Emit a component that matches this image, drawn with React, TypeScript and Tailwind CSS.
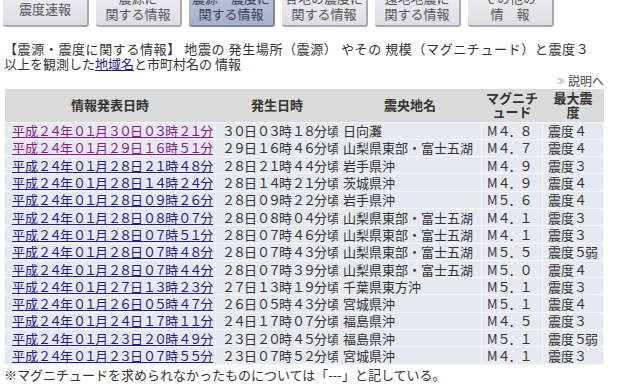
import React from 'react';

interface Quake {
  issued: string;
  occurred: string;
  area: string;
  mag: string;
  shindo: string;
  visited?: boolean;
}

const quakes: Quake[] = [
  { issued: '平成２４年０１月３０日０３時２１分', occurred: '３０日０３時１８分頃', area: '日向灘', mag: 'M４．８', shindo: '震度４', visited: true },
  { issued: '平成２４年０１月２９日１６時５１分', occurred: '２９日１６時４６分頃', area: '山梨県東部・富士五湖', mag: 'M４．７', shindo: '震度４', visited: true },
  { issued: '平成２４年０１月２８日２１時４８分', occurred: '２８日２１時４４分頃', area: '岩手県沖', mag: 'M４．９', shindo: '震度３' },
  { issued: '平成２４年０１月２８日１４時２４分', occurred: '２８日１４時２１分頃', area: '茨城県沖', mag: 'M４．９', shindo: '震度４' },
  { issued: '平成２４年０１月２８日０９時２６分', occurred: '２８日０９時２２分頃', area: '岩手県沖', mag: 'M５．６', shindo: '震度４' },
  { issued: '平成２４年０１月２８日０８時０７分', occurred: '２８日０８時０４分頃', area: '山梨県東部・富士五湖', mag: 'M４．１', shindo: '震度３' },
  { issued: '平成２４年０１月２８日０７時５１分', occurred: '２８日０７時４６分頃', area: '山梨県東部・富士五湖', mag: 'M４．１', shindo: '震度３' },
  { issued: '平成２４年０１月２８日０７時４８分', occurred: '２８日０７時４３分頃', area: '山梨県東部・富士五湖', mag: 'M５．５', shindo: '震度５弱' },
  { issued: '平成２４年０１月２８日０７時４４分', occurred: '２８日０７時３９分頃', area: '山梨県東部・富士五湖', mag: 'M５．０', shindo: '震度４' },
  { issued: '平成２４年０１月２７日１３時２３分', occurred: '２７日１３時１９分頃', area: '千葉県東方沖', mag: 'M５．１', shindo: '震度３' },
  { issued: '平成２４年０１月２６日０５時４７分', occurred: '２６日０５時４３分頃', area: '宮城県沖', mag: 'M５．１', shindo: '震度４' },
  { issued: '平成２４年０１月２４日１７時１１分', occurred: '２４日１７時０７分頃', area: '福島県沖', mag: 'M４．５', shindo: '震度３' },
  { issued: '平成２４年０１月２３日２０時４９分', occurred: '２３日２０時４５分頃', area: '福島県沖', mag: 'M５．１', shindo: '震度５弱' },
  { issued: '平成２４年０１月２３日０７時５５分', occurred: '２３日０７時５２分頃', area: '宮城県沖', mag: 'M４．１', shindo: '震度３' },
];

const tabs = [
  { top: '', bottom: '震度速報' },
  { top: '震源に', bottom: '関する情報' },
  { top: '震源・震度に', bottom: '関する情報', active: true },
  { top: '各地の震度に', bottom: '関する情報' },
  { top: '遠地地震に', bottom: '関する情報' },
  { top: 'その他の', bottom: '情　報' },
];

// full-width digits are a bit narrower in the original font, squeeze them
const fmt = (s: string) =>
  s.split(/([０-９．]+)/).map((part, i) =>
    /[０-９．]/.test(part) ? (
      <span key={i} className="tracking-[-2px]">{part}</span>
    ) : (
      part
    )
  );

export default function App() {
  return (
    <div className="w-[629px] h-[387px] overflow-hidden bg-white text-[#333] font-['Noto_Sans_CJK_JP',sans-serif]">
      {/* tab buttons, page is scrolled so the tops are cut */}
      <div className="flex gap-[7px] pl-[3px] -mt-[13px]">
        {tabs.map((t, i) => (
          <div
            key={i}
            className={`w-[86px] h-[40px] flex flex-col items-center justify-center rounded-b-[3px] border-r-2 border-b-2 text-[13px] leading-[16px] ${
              t.active
                ? 'bg-gradient-to-b from-[#c3cadf] to-[#a7b0cb] border-[#7d869f] text-[#3a3f52]'
                : 'bg-gradient-to-b from-[#f3f3f6] to-[#dcdce2] border-[#a9a9b1] text-[#555]'
            }`}
          >
            {t.top ? (
              <>
                <span>{t.top}</span>
                <span>{t.bottom}</span>
              </>
            ) : (
              <span className="mt-[6px]">{t.bottom}</span>
            )}
          </div>
        ))}
      </div>

      <p className="mt-[14px] px-[4px] text-[13px] leading-[15px]">
        <span className="tracking-[0.6px]">【震源・震度に関する情報】 地震の 発生場所（震源） やその 規模（マグニチュード）と震度３</span>
        <br />
        以上を観測した<a className="text-[#1c1c8a] underline">地域名</a>と市町村名の 情報
      </p>

      <div className="flex justify-end items-center pr-[25px] mt-[3px] text-[12px] leading-[14px] text-[#444]">
        <span className="text-[8px] text-[#888] mr-[3px]">≫</span>説明へ
      </div>

      <table className="ml-[4px] mt-[1px] w-[599px] table-fixed border-collapse text-[13px] leading-[15px]">
        <colgroup>
          <col className="w-[211px]" />
          <col className="w-[123px]" />
          <col className="w-[143px]" />
          <col className="w-[61px]" />
          <col className="w-[61px]" />
        </colgroup>
        <thead>
          <tr className="bg-[#dadada] font-bold text-[#333] text-[13px] leading-[14px]">
            <th className="h-[33px] p-0">情報発表日時</th>
            <th className="p-0">発生日時</th>
            <th className="p-0">震央地名</th>
            <th className="p-0">マグニチ<br />ュード</th>
            <th className="p-0">最大震<br />度</th>
          </tr>
        </thead>
        <tbody>
          {quakes.map((q, i) => (
            <tr key={i} className="bg-[#e7e9f1] h-[17.3px]">
              <td className="border border-[#f5f5f8] pl-[7px] py-0 whitespace-nowrap overflow-hidden">
                <a className={`underline ${q.visited ? 'text-[#8a1a8a]' : 'text-[#1c1c8a]'}`}>{fmt(q.issued)}</a>
              </td>
              <td className="border border-[#f5f5f8] pl-[6px] py-0 whitespace-nowrap overflow-hidden">{fmt(q.occurred)}</td>
              <td className="border border-[#f5f5f8] pl-[4px] py-0 whitespace-nowrap overflow-hidden">{q.area}</td>
              <td className="border border-[#f5f5f8] pl-[5px] py-0 whitespace-nowrap overflow-hidden">{fmt(q.mag)}</td>
              <td className="border border-[#f5f5f8] pl-[5px] py-0 whitespace-nowrap overflow-hidden">{fmt(q.shindo)}</td>
            </tr>
          ))}
        </tbody>
      </table>

      <p className="mt-[2px] px-[4px] text-[13px] leading-[16px]">
        ※マグニチュードを求められなかったものについては「---」と記している。
      </p>
    </div>
  );
}
